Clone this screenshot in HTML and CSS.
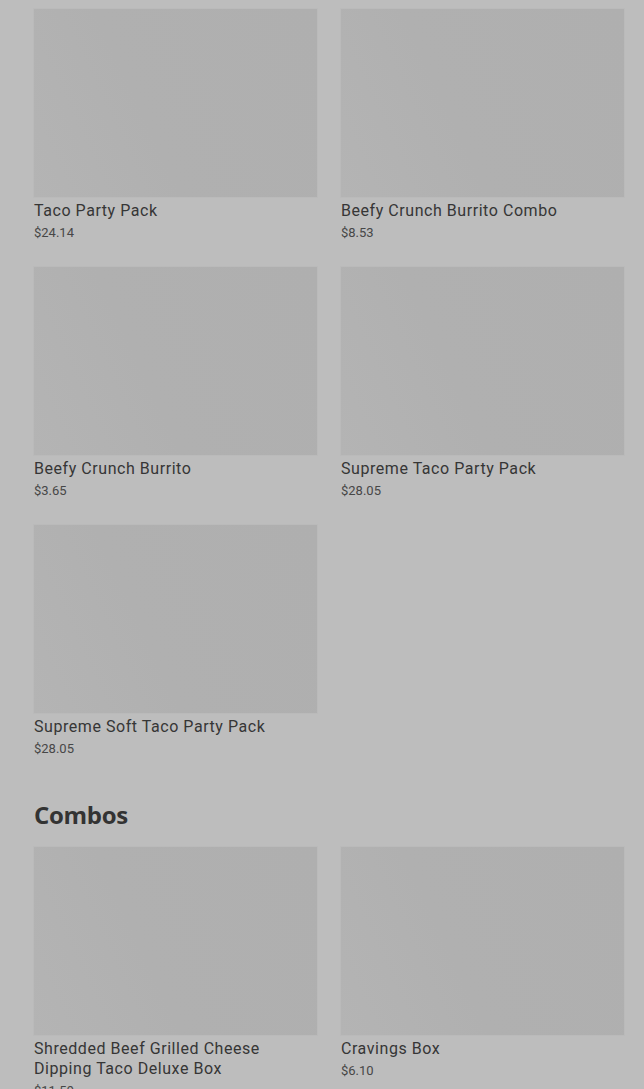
FILE: index.html
```html
<!DOCTYPE html>
<html lang="en">
<head>
    <meta charset="UTF-8">
    <meta name="viewport" content="width=device-width, initial-scale=1.0">
    <title>Menu</title>
    <link rel="stylesheet" href="styles.css">
</head>
<body>
    <div id="menu">
        <div class="section">
            <div class="grid">
                <div class="item">
                    <div class="thumb"></div>
                    <div class="name">Taco Party Pack</div>
                    <div class="price">$24.14</div>
                </div>
                <div class="item">
                    <div class="thumb"></div>
                    <div class="name">Beefy Crunch Burrito Combo</div>
                    <div class="price">$8.53</div>
                </div>
                <div class="item">
                    <div class="thumb"></div>
                    <div class="name">Beefy Crunch Burrito</div>
                    <div class="price">$3.65</div>
                </div>
                <div class="item">
                    <div class="thumb"></div>
                    <div class="name">Supreme Taco Party Pack</div>
                    <div class="price">$28.05</div>
                </div>
                <div class="item">
                    <div class="thumb"></div>
                    <div class="name">Supreme Soft Taco Party Pack</div>
                    <div class="price">$28.05</div>
                </div>
            </div>
        </div>
        <div class="section">
            <h2>Combos</h2>
            <div class="grid">
                <div class="item">
                    <div class="thumb"></div>
                    <div class="name">Shredded Beef Grilled Cheese Dipping Taco Deluxe Box</div>
                    <div class="price">$11.59</div>
                </div>
                <div class="item">
                    <div class="thumb"></div>
                    <div class="name">Cravings Box</div>
                    <div class="price">$6.10</div>
                </div>
            </div>
        </div>
    </div>
</body>
</html>
```

FILE: styles.css
```css
body, html {
    margin: 0;
    padding: 0;
    background-color: #bdbdbd;
    font-family: Roboto, "Liberation Sans", sans-serif;
    overflow: hidden;
}
#menu {
    padding: 9px 20px 0 34px;
}
.section h2 {
    margin: 40px 0 16px 0;
    font-family: "Open Sans", sans-serif;
    font-size: 24px;
    line-height: 32px;
    font-weight: 700;
    letter-spacing: -0.3px;
    color: #333333;
}
.grid {
    display: grid;
    grid-template-columns: 283px 283px;
    column-gap: 24px;
    row-gap: 24px;
}
.thumb {
    height: 188px;
    background: linear-gradient(65deg, #b4b4b4 0%, #b0b0b0 40%, #afafaf 100%);
    box-shadow: 0 0 0 1px rgba(0, 0, 0, 0.015);
}
.name {
    margin-top: 4px;
    font-size: 16px;
    line-height: 20px;
    font-weight: 400;
    letter-spacing: 0.55px;
    color: #363636;
}
.price {
    margin-top: 2px;
    font-size: 13px;
    line-height: 20px;
    color: #474747;
}
```
